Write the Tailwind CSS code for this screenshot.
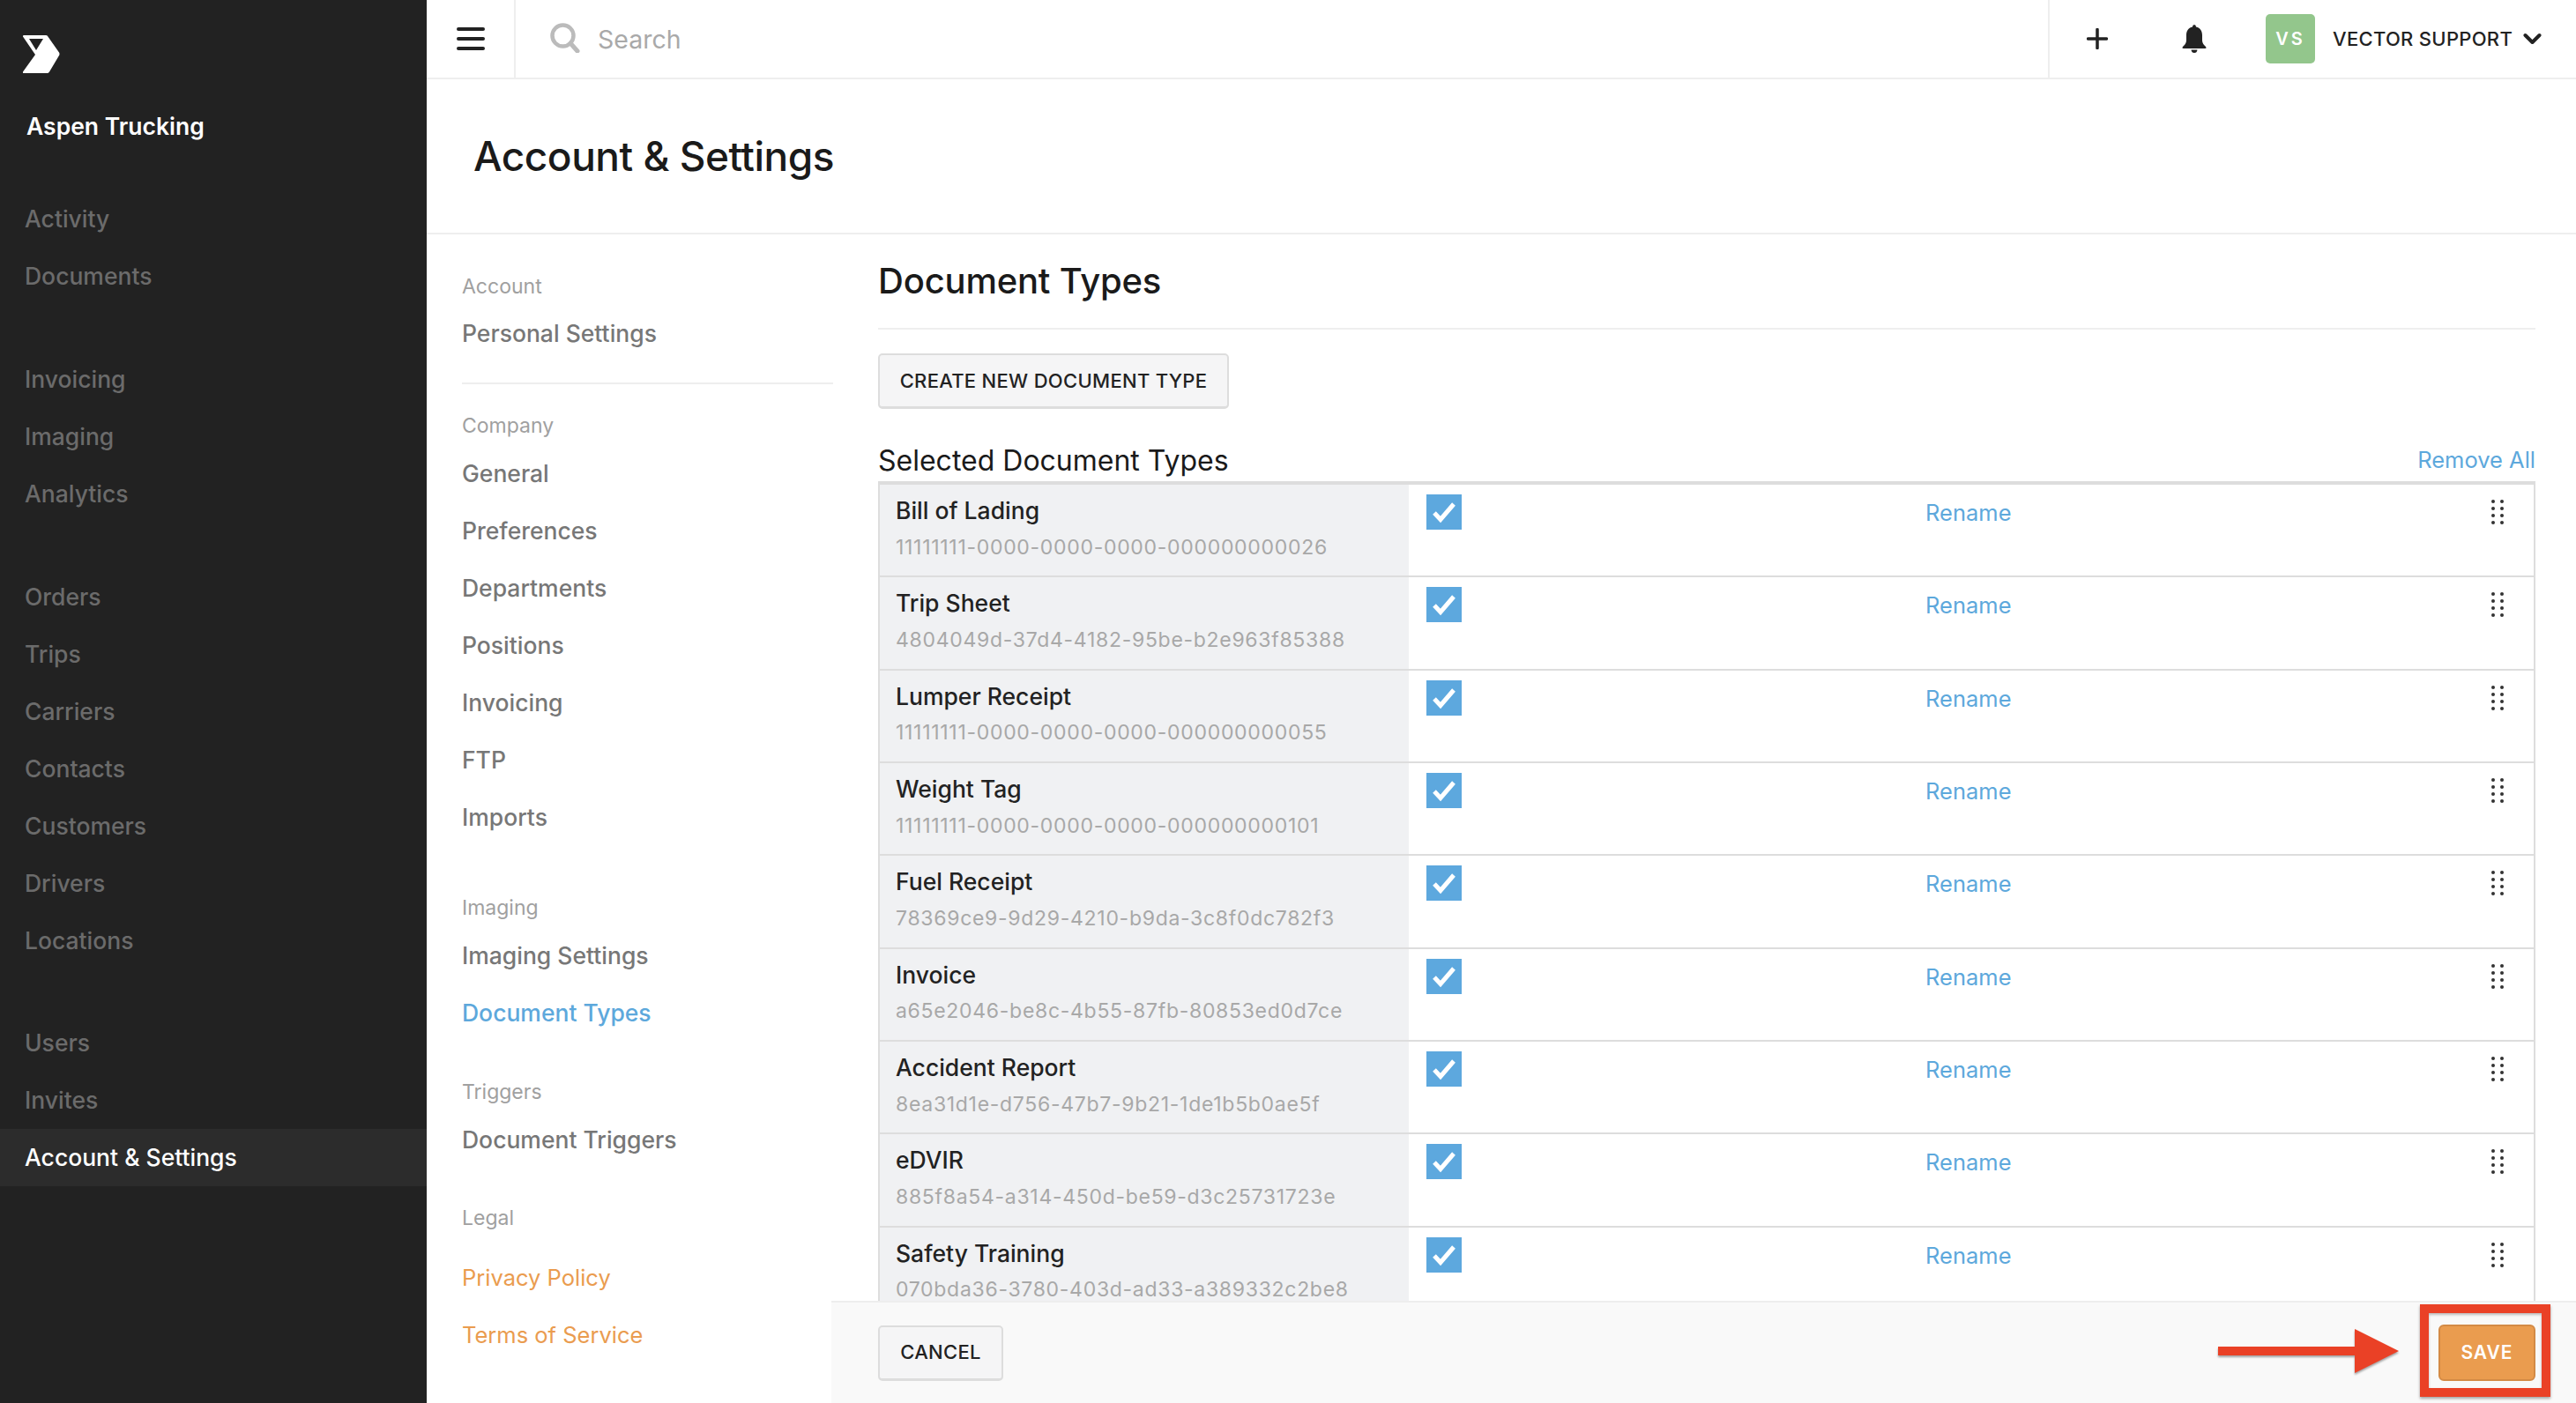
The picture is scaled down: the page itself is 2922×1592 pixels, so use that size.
<!DOCTYPE html>
<html lang="en">
<head>
<meta charset="UTF-8">
<title>Account &amp; Settings</title>
<script src="https://cdn.jsdelivr.net/npm/@tailwindcss/browser@4"></script>
</head>
<body class="font-['Inter',sans-serif] bg-white">
<div class="relative flex h-[1592px] w-[2922px] overflow-hidden">

  <!-- sidebar -->
  <aside class="w-[484px] shrink-0 bg-[#222222]">
    <div class="h-[215px] pl-[26px] pt-[40px]">
      <svg class="w-[42px] h-[43px]" viewBox="0 0 42 43"><path fill="#fff" fill-rule="evenodd" d="M1 0H26Q27.500 0 28 1L41 19.500Q42 21 41 23L30 41.500Q29 43 27.500 43H1Q-.5 43 0 41.500L14 22L0 1.500Q-.5 0 1 0ZM7 4L15 17L23 4Z"/></svg>
      <div class="mt-[40px] ml-[4px] text-[26.500px] leading-[40px] font-semibold text-white">Aspen Trucking</div>
    </div>
    <nav class="text-[26.500px] font-medium text-[#6b6b6b]">
      <div class="mb-[52px]">
        <a class="flex items-center h-[65px] pl-[28px] pt-[2px]">Activity</a>
        <a class="flex items-center h-[65px] pl-[28px] pt-[2px]">Documents</a>
      </div>
      <div class="mb-[52px]">
        <a class="flex items-center h-[65px] pl-[28px] pt-[2px]">Invoicing</a>
        <a class="flex items-center h-[65px] pl-[28px] pt-[2px]">Imaging</a>
        <a class="flex items-center h-[65px] pl-[28px] pt-[2px]">Analytics</a>
      </div>
      <div class="mb-[52px]">
        <a class="flex items-center h-[65px] pl-[28px] pt-[2px]">Orders</a>
        <a class="flex items-center h-[65px] pl-[28px] pt-[2px]">Trips</a>
        <a class="flex items-center h-[65px] pl-[28px] pt-[2px]">Carriers</a>
        <a class="flex items-center h-[65px] pl-[28px] pt-[2px]">Contacts</a>
        <a class="flex items-center h-[65px] pl-[28px] pt-[2px]">Customers</a>
        <a class="flex items-center h-[65px] pl-[28px] pt-[2px]">Drivers</a>
        <a class="flex items-center h-[65px] pl-[28px] pt-[2px]">Locations</a>
      </div>
      <div>
        <a class="flex items-center h-[65px] pl-[28px]">Users</a>
        <a class="flex items-center h-[65px] pl-[28px]">Invites</a>
        <a class="flex items-center h-[65px] pl-[28px] bg-[#2c2c2c] text-white">Account &amp; Settings</a>
      </div>
    </nav>
  </aside>

  <div class="flex-1 flex flex-col min-w-0">
    <!-- top bar -->
    <header class="flex h-[90px] shrink-0 border-b-2 border-[#eeeeee]">
      <div class="w-[101px] shrink-0 flex items-center justify-center border-r-2 border-[#eeeeee]">
        <svg class="w-[32px] h-[26px]" viewBox="0 0 32 26"><rect y="0" width="32" height="4" rx="2" fill="#222"/><rect y="11" width="32" height="4" rx="2" fill="#222"/><rect y="22" width="32" height="4" rx="2" fill="#222"/></svg>
      </div>
      <div class="flex-1 flex items-center pl-[39px] border-r-2 border-[#eeeeee]">
        <svg class="w-[34px] h-[34px] -mt-[2px]" viewBox="0 0 34 34" fill="none" stroke="#bbbbbb"><circle cx="14.500" cy="14.500" r="12" stroke-width="4.500"/><path d="M23 23L31 32" stroke-width="5" stroke-linecap="round"/></svg>
        <span class="ml-[20px] mt-[2px] text-[28.500px] text-[#a9a9a9]">Search</span>
      </div>
      <div class="w-[597px] shrink-0 flex items-center pl-[42px]">
        <svg class="w-[24px] h-[24px]" viewBox="0 0 24 24"><path d="M12 1.500V22.500M1.500 12H22.500" stroke="#222" stroke-width="3.500" stroke-linecap="round"/></svg>
        <svg class="ml-[84px] w-[28px] h-[32px]" viewBox="0 0 28 32" fill="#222"><path d="M14 0Q16 0 16 2.500C21 3.500 23 7.500 23 12V18C23 21 25 23 27 25Q28.500 27 26 27H2Q-.5 27 1 25C3 23 5 21 5 18V12C5 7.500 7 3.500 12 2.500Q12 0 14 0Z"/><path d="M10.500 28.500H17.500Q17 32 14 32Q11 32 10.500 28.500Z"/></svg>
        <div class="ml-[67px] flex items-center justify-center w-[56px] h-[56px] rounded-[5px] bg-[#93c68c] text-[20px] font-semibold tracking-[3px] text-white">VS</div>
        <span class="ml-[20px] text-[22px] font-medium tracking-[0.3px] text-[#222222]">VECTOR SUPPORT</span>
        <svg class="ml-[12px] w-[21px] h-[14px]" viewBox="0 0 21 14" fill="none"><path d="M2.500 3L10.500 11L18.500 3" stroke="#222" stroke-width="4" stroke-linecap="round" stroke-linejoin="round"/></svg>
      </div>
    </header>

    <!-- page title -->
    <div class="h-[176px] shrink-0 flex items-center pl-[53px] border-b-2 border-[#eeeeee]">
      <h1 class="text-[46px] font-medium text-[#1a1a1a] tracking-[-0.5px]">Account &amp; Settings</h1>
    </div>

    <div class="flex-1 flex min-h-0">
      <!-- settings nav -->
      <nav class="w-[459px] shrink-0 pl-[40px] text-[26.500px]">
        <div class="w-[421px] h-[170px] border-b-2 border-[#eeeeee] pt-[41px]">
          <div class="h-[36px] flex items-center text-[23px] text-[#a0a0a0]">Account</div>
          <a class="mt-[18px] flex items-center h-[36px] font-medium text-[#777777]">Personal Settings</a>
        </div>
        <div class="h-[36px] mt-[29px] flex items-center text-[23px] text-[#a0a0a0]">Company</div>
        <div class="mt-[4px]">
          <a class="flex items-center h-[65px] font-medium text-[#777777]">General</a>
          <a class="flex items-center h-[65px] font-medium text-[#777777]">Preferences</a>
          <a class="flex items-center h-[65px] font-medium text-[#777777]">Departments</a>
          <a class="flex items-center h-[65px] font-medium text-[#777777]">Positions</a>
          <a class="flex items-center h-[65px] font-medium text-[#777777]">Invoicing</a>
          <a class="flex items-center h-[65px] font-medium text-[#777777]">FTP</a>
          <a class="flex items-center h-[65px] font-medium text-[#777777]">Imports</a>
        </div>
        <div class="h-[36px] mt-[52px] flex items-center text-[23px] text-[#a0a0a0]">Imaging</div>
        <div class="mt-[4px]">
          <a class="flex items-center h-[65px] font-medium text-[#777777]">Imaging Settings</a>
          <a class="flex items-center h-[65px] font-medium text-[#5da8dc]">Document Types</a>
        </div>
        <div class="h-[36px] mt-[39px] flex items-center text-[23px] text-[#a0a0a0]">Triggers</div>
        <a class="mt-[4px] flex items-center h-[65px] font-medium text-[#777777]">Document Triggers</a>
        <div class="h-[36px] mt-[38px] flex items-center text-[23px] text-[#a0a0a0]">Legal</div>
        <div class="mt-[18px] text-[25.500px]">
          <a class="flex items-center h-[65px] text-[#ea9c4f]">Privacy Policy</a>
          <a class="flex items-center h-[65px] text-[#ea9c4f]">Terms of Service</a>
        </div>
      </nav>

      <!-- document types -->
      <div class="flex-1 flex flex-col min-w-0">
        <div class="flex-1 min-h-0 overflow-hidden pl-[53px] pr-[46px]">
          <div class="h-[108px] flex items-center border-b-2 border-[#eeeeee]">
            <h2 class="text-[40px] font-medium text-[#1a1a1a] tracking-[-0.2px] mt-[-1px]">Document Types</h2>
          </div>
          <button class="mt-[27px] h-[63px] w-[398px] rounded-[5px] border-2 border-b-[3px] border-[#dddddd] bg-[#f5f5f6] text-[22px] font-medium tracking-[0.3px] text-[#222222]">CREATE NEW DOCUMENT TYPE</button>
          <div class="mt-[40px] h-[42px] pb-[5px] flex items-center justify-between">
            <h3 class="text-[32px] text-[#1a1a1a]">Selected Document Types</h3>
            <a class="text-[25.500px] text-[#5da8dc]">Remove All</a>
          </div>
          <div class="border-t-[4px] border-[#dddddd]">

            <div class="flex h-[105.33px] border-b-2 border-r-2 border-[#dddddd]">
              <div class="w-[602px] shrink-0 bg-[#f0f1f3] border-l-2 border-[#dddddd] pl-[18px] pt-[10px]">
                <div class="h-[40px] flex items-center text-[26.500px] font-medium text-[#222222]">Bill of Lading</div>
                <div class="h-[42px] flex items-center text-[23px] tracking-[0.7px] text-[#a8a8a8]">11111111-0000-0000-0000-000000000026</div>
              </div>
              <div class="w-[586px] shrink-0 pl-[20px] pt-[11px]">
                <svg class="w-[40px] h-[40px]" viewBox="0 0 40 40"><rect width="40" height="40" fill="#5da8de"/><path d="M9 21L16 28.500L31 11" fill="none" stroke="#fff" stroke-width="5"/></svg>
              </div>
              <div class="w-[642px] shrink-0 pt-[12px] h-[52px] flex items-center text-[25.500px] text-[#5da8dc]">Rename</div>
              <svg class="mt-[17px] w-[14px] h-[30px]" viewBox="0 0 14 30" fill="#333"><circle cx="2" cy="2" r="2"/><circle cx="12" cy="2" r="2"/><circle cx="2" cy="10" r="2"/><circle cx="12" cy="10" r="2"/><circle cx="2" cy="18" r="2"/><circle cx="12" cy="18" r="2"/><circle cx="2" cy="26" r="2"/><circle cx="12" cy="26" r="2"/></svg>
            </div>

            <div class="flex h-[105.33px] border-b-2 border-r-2 border-[#dddddd]">
              <div class="w-[602px] shrink-0 bg-[#f0f1f3] border-l-2 border-[#dddddd] pl-[18px] pt-[10px]">
                <div class="h-[40px] flex items-center text-[26.500px] font-medium text-[#222222]">Trip Sheet</div>
                <div class="h-[42px] flex items-center text-[23px] tracking-[0.7px] text-[#a8a8a8]">4804049d-37d4-4182-95be-b2e963f85388</div>
              </div>
              <div class="w-[586px] shrink-0 pl-[20px] pt-[11px]">
                <svg class="w-[40px] h-[40px]" viewBox="0 0 40 40"><rect width="40" height="40" fill="#5da8de"/><path d="M9 21L16 28.500L31 11" fill="none" stroke="#fff" stroke-width="5"/></svg>
              </div>
              <div class="w-[642px] shrink-0 pt-[12px] h-[52px] flex items-center text-[25.500px] text-[#5da8dc]">Rename</div>
              <svg class="mt-[17px] w-[14px] h-[30px]" viewBox="0 0 14 30" fill="#333"><circle cx="2" cy="2" r="2"/><circle cx="12" cy="2" r="2"/><circle cx="2" cy="10" r="2"/><circle cx="12" cy="10" r="2"/><circle cx="2" cy="18" r="2"/><circle cx="12" cy="18" r="2"/><circle cx="2" cy="26" r="2"/><circle cx="12" cy="26" r="2"/></svg>
            </div>

            <div class="flex h-[105.33px] border-b-2 border-r-2 border-[#dddddd]">
              <div class="w-[602px] shrink-0 bg-[#f0f1f3] border-l-2 border-[#dddddd] pl-[18px] pt-[10px]">
                <div class="h-[40px] flex items-center text-[26.500px] font-medium text-[#222222]">Lumper Receipt</div>
                <div class="h-[42px] flex items-center text-[23px] tracking-[0.7px] text-[#a8a8a8]">11111111-0000-0000-0000-000000000055</div>
              </div>
              <div class="w-[586px] shrink-0 pl-[20px] pt-[11px]">
                <svg class="w-[40px] h-[40px]" viewBox="0 0 40 40"><rect width="40" height="40" fill="#5da8de"/><path d="M9 21L16 28.500L31 11" fill="none" stroke="#fff" stroke-width="5"/></svg>
              </div>
              <div class="w-[642px] shrink-0 pt-[12px] h-[52px] flex items-center text-[25.500px] text-[#5da8dc]">Rename</div>
              <svg class="mt-[17px] w-[14px] h-[30px]" viewBox="0 0 14 30" fill="#333"><circle cx="2" cy="2" r="2"/><circle cx="12" cy="2" r="2"/><circle cx="2" cy="10" r="2"/><circle cx="12" cy="10" r="2"/><circle cx="2" cy="18" r="2"/><circle cx="12" cy="18" r="2"/><circle cx="2" cy="26" r="2"/><circle cx="12" cy="26" r="2"/></svg>
            </div>

            <div class="flex h-[105.33px] border-b-2 border-r-2 border-[#dddddd]">
              <div class="w-[602px] shrink-0 bg-[#f0f1f3] border-l-2 border-[#dddddd] pl-[18px] pt-[10px]">
                <div class="h-[40px] flex items-center text-[26.500px] font-medium text-[#222222]">Weight Tag</div>
                <div class="h-[42px] flex items-center text-[23px] tracking-[0.7px] text-[#a8a8a8]">11111111-0000-0000-0000-000000000101</div>
              </div>
              <div class="w-[586px] shrink-0 pl-[20px] pt-[11px]">
                <svg class="w-[40px] h-[40px]" viewBox="0 0 40 40"><rect width="40" height="40" fill="#5da8de"/><path d="M9 21L16 28.500L31 11" fill="none" stroke="#fff" stroke-width="5"/></svg>
              </div>
              <div class="w-[642px] shrink-0 pt-[12px] h-[52px] flex items-center text-[25.500px] text-[#5da8dc]">Rename</div>
              <svg class="mt-[17px] w-[14px] h-[30px]" viewBox="0 0 14 30" fill="#333"><circle cx="2" cy="2" r="2"/><circle cx="12" cy="2" r="2"/><circle cx="2" cy="10" r="2"/><circle cx="12" cy="10" r="2"/><circle cx="2" cy="18" r="2"/><circle cx="12" cy="18" r="2"/><circle cx="2" cy="26" r="2"/><circle cx="12" cy="26" r="2"/></svg>
            </div>

            <div class="flex h-[105.33px] border-b-2 border-r-2 border-[#dddddd]">
              <div class="w-[602px] shrink-0 bg-[#f0f1f3] border-l-2 border-[#dddddd] pl-[18px] pt-[10px]">
                <div class="h-[40px] flex items-center text-[26.500px] font-medium text-[#222222]">Fuel Receipt</div>
                <div class="h-[42px] flex items-center text-[23px] tracking-[0.7px] text-[#a8a8a8]">78369ce9-9d29-4210-b9da-3c8f0dc782f3</div>
              </div>
              <div class="w-[586px] shrink-0 pl-[20px] pt-[11px]">
                <svg class="w-[40px] h-[40px]" viewBox="0 0 40 40"><rect width="40" height="40" fill="#5da8de"/><path d="M9 21L16 28.500L31 11" fill="none" stroke="#fff" stroke-width="5"/></svg>
              </div>
              <div class="w-[642px] shrink-0 pt-[12px] h-[52px] flex items-center text-[25.500px] text-[#5da8dc]">Rename</div>
              <svg class="mt-[17px] w-[14px] h-[30px]" viewBox="0 0 14 30" fill="#333"><circle cx="2" cy="2" r="2"/><circle cx="12" cy="2" r="2"/><circle cx="2" cy="10" r="2"/><circle cx="12" cy="10" r="2"/><circle cx="2" cy="18" r="2"/><circle cx="12" cy="18" r="2"/><circle cx="2" cy="26" r="2"/><circle cx="12" cy="26" r="2"/></svg>
            </div>

            <div class="flex h-[105.33px] border-b-2 border-r-2 border-[#dddddd]">
              <div class="w-[602px] shrink-0 bg-[#f0f1f3] border-l-2 border-[#dddddd] pl-[18px] pt-[10px]">
                <div class="h-[40px] flex items-center text-[26.500px] font-medium text-[#222222]">Invoice</div>
                <div class="h-[42px] flex items-center text-[23px] tracking-[0.7px] text-[#a8a8a8]">a65e2046-be8c-4b55-87fb-80853ed0d7ce</div>
              </div>
              <div class="w-[586px] shrink-0 pl-[20px] pt-[11px]">
                <svg class="w-[40px] h-[40px]" viewBox="0 0 40 40"><rect width="40" height="40" fill="#5da8de"/><path d="M9 21L16 28.500L31 11" fill="none" stroke="#fff" stroke-width="5"/></svg>
              </div>
              <div class="w-[642px] shrink-0 pt-[12px] h-[52px] flex items-center text-[25.500px] text-[#5da8dc]">Rename</div>
              <svg class="mt-[17px] w-[14px] h-[30px]" viewBox="0 0 14 30" fill="#333"><circle cx="2" cy="2" r="2"/><circle cx="12" cy="2" r="2"/><circle cx="2" cy="10" r="2"/><circle cx="12" cy="10" r="2"/><circle cx="2" cy="18" r="2"/><circle cx="12" cy="18" r="2"/><circle cx="2" cy="26" r="2"/><circle cx="12" cy="26" r="2"/></svg>
            </div>

            <div class="flex h-[105.33px] border-b-2 border-r-2 border-[#dddddd]">
              <div class="w-[602px] shrink-0 bg-[#f0f1f3] border-l-2 border-[#dddddd] pl-[18px] pt-[10px]">
                <div class="h-[40px] flex items-center text-[26.500px] font-medium text-[#222222]">Accident Report</div>
                <div class="h-[42px] flex items-center text-[23px] tracking-[0.7px] text-[#a8a8a8]">8ea31d1e-d756-47b7-9b21-1de1b5b0ae5f</div>
              </div>
              <div class="w-[586px] shrink-0 pl-[20px] pt-[11px]">
                <svg class="w-[40px] h-[40px]" viewBox="0 0 40 40"><rect width="40" height="40" fill="#5da8de"/><path d="M9 21L16 28.500L31 11" fill="none" stroke="#fff" stroke-width="5"/></svg>
              </div>
              <div class="w-[642px] shrink-0 pt-[12px] h-[52px] flex items-center text-[25.500px] text-[#5da8dc]">Rename</div>
              <svg class="mt-[17px] w-[14px] h-[30px]" viewBox="0 0 14 30" fill="#333"><circle cx="2" cy="2" r="2"/><circle cx="12" cy="2" r="2"/><circle cx="2" cy="10" r="2"/><circle cx="12" cy="10" r="2"/><circle cx="2" cy="18" r="2"/><circle cx="12" cy="18" r="2"/><circle cx="2" cy="26" r="2"/><circle cx="12" cy="26" r="2"/></svg>
            </div>

            <div class="flex h-[105.33px] border-b-2 border-r-2 border-[#dddddd]">
              <div class="w-[602px] shrink-0 bg-[#f0f1f3] border-l-2 border-[#dddddd] pl-[18px] pt-[10px]">
                <div class="h-[40px] flex items-center text-[26.500px] font-medium text-[#222222]">eDVIR</div>
                <div class="h-[42px] flex items-center text-[23px] tracking-[0.7px] text-[#a8a8a8]">885f8a54-a314-450d-be59-d3c25731723e</div>
              </div>
              <div class="w-[586px] shrink-0 pl-[20px] pt-[11px]">
                <svg class="w-[40px] h-[40px]" viewBox="0 0 40 40"><rect width="40" height="40" fill="#5da8de"/><path d="M9 21L16 28.500L31 11" fill="none" stroke="#fff" stroke-width="5"/></svg>
              </div>
              <div class="w-[642px] shrink-0 pt-[12px] h-[52px] flex items-center text-[25.500px] text-[#5da8dc]">Rename</div>
              <svg class="mt-[17px] w-[14px] h-[30px]" viewBox="0 0 14 30" fill="#333"><circle cx="2" cy="2" r="2"/><circle cx="12" cy="2" r="2"/><circle cx="2" cy="10" r="2"/><circle cx="12" cy="10" r="2"/><circle cx="2" cy="18" r="2"/><circle cx="12" cy="18" r="2"/><circle cx="2" cy="26" r="2"/><circle cx="12" cy="26" r="2"/></svg>
            </div>

            <div class="flex h-[105.33px] border-b-2 border-r-2 border-[#dddddd]">
              <div class="w-[602px] shrink-0 bg-[#f0f1f3] border-l-2 border-[#dddddd] pl-[18px] pt-[10px]">
                <div class="h-[40px] flex items-center text-[26.500px] font-medium text-[#222222]">Safety Training</div>
                <div class="h-[42px] flex items-center text-[23px] tracking-[0.7px] text-[#a8a8a8]">070bda36-3780-403d-ad33-a389332c2be8</div>
              </div>
              <div class="w-[586px] shrink-0 pl-[20px] pt-[11px]">
                <svg class="w-[40px] h-[40px]" viewBox="0 0 40 40"><rect width="40" height="40" fill="#5da8de"/><path d="M9 21L16 28.500L31 11" fill="none" stroke="#fff" stroke-width="5"/></svg>
              </div>
              <div class="w-[642px] shrink-0 pt-[12px] h-[52px] flex items-center text-[25.500px] text-[#5da8dc]">Rename</div>
              <svg class="mt-[17px] w-[14px] h-[30px]" viewBox="0 0 14 30" fill="#333"><circle cx="2" cy="2" r="2"/><circle cx="12" cy="2" r="2"/><circle cx="2" cy="10" r="2"/><circle cx="12" cy="10" r="2"/><circle cx="2" cy="18" r="2"/><circle cx="12" cy="18" r="2"/><circle cx="2" cy="26" r="2"/><circle cx="12" cy="26" r="2"/></svg>
            </div>

          </div>
        </div>

        <!-- footer -->
        <div class="h-[116px] shrink-0 flex items-center justify-between pl-[53px] pr-[46px] bg-[#f9f9f9] border-t-2 border-[#eeeeee]">
          <button class="h-[63px] w-[142px] rounded-[5px] border-2 border-b-[3px] border-[#dddddd] bg-[#f5f5f6] text-[22px] font-medium tracking-[0.3px] text-[#222222]">CANCEL</button>
          <button class="h-[64px] w-[110px] rounded-[6px] border-2 border-[#d38a45] bg-[#ea9c4f] text-[21px] font-semibold tracking-[1px] text-white">SAVE</button>
        </div>
      </div>
    </div>
  </div>

  <!-- annotation over the save button -->
  <div class="absolute left-[2745px] top-[1480px] w-[148px] h-[105px] border-[10px] border-[#ea4126] shadow-[0_2px_3px_rgba(0,0,0,0.35),inset_0_2px_3px_rgba(0,0,0,0.25)]"></div>
  <svg class="absolute left-[2516px] top-[1508px] w-[205px] h-[50px] overflow-visible drop-shadow-[0_2px_1px_rgba(0,0,0,0.35)]" viewBox="0 0 205 50"><path fill="#ea4126" d="M0 20H155V0L205 25L155 50V30H0Z"/></svg>
</div>
</body>
</html>
